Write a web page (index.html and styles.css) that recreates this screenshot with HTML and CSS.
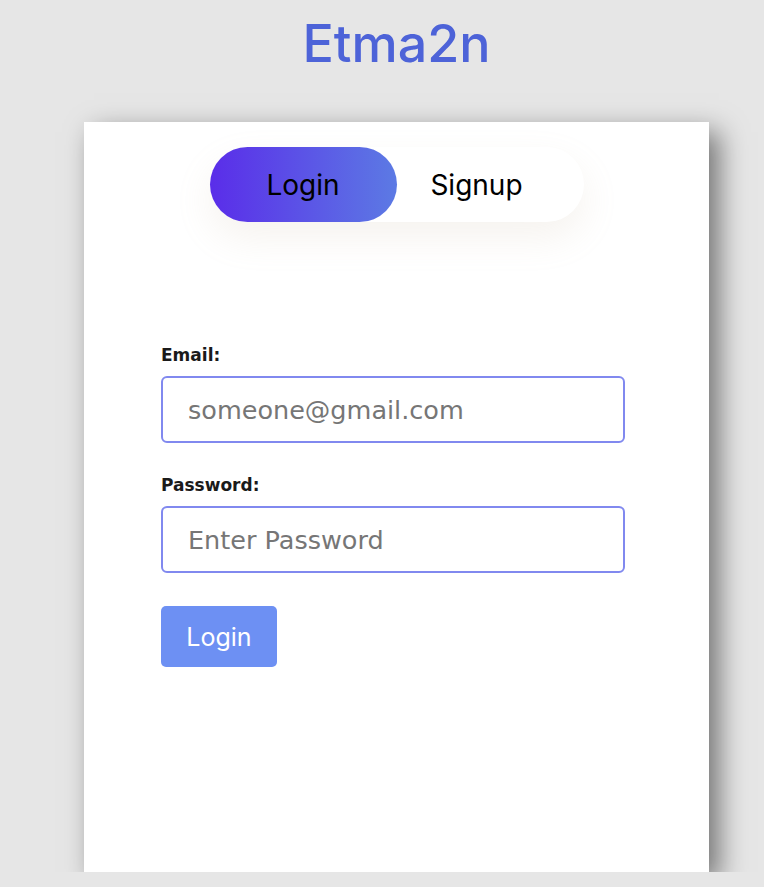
FILE: index.html
```html
<!DOCTYPE html>
<html>
<head>
<meta charset="utf-8">
<link rel="stylesheet" href="styles.css">
</head>
<body>
<div class="wrap">
  <h1 class="title">Etma2n</h1>
  <div class="card">
    <div class="toggle">
      <button class="tab active">Login</button>
      <button class="tab tab-right">Signup</button>
    </div>
    <form class="form">
      <label class="label" for="email">Email:</label>
      <input class="field" id="email" type="text" placeholder="someone@gmail.com">
      <label class="label" for="pw">Password:</label>
      <input class="field" id="pw" type="password" placeholder="Enter Password">
      <button type="button" class="submit">Login</button>
    </form>
  </div>
</div>
</body>
</html>
```

FILE: styles.css
```css
html, body {
  margin: 0;
  padding: 0;
  background: #e6e6e6;
  font-family: Inter, "Noto Sans", sans-serif;
}
.wrap {
  width: 625px;
  margin-left: 84px;
  padding-top: 14px;
}
.title {
  margin: 0;
  text-align: center;
  font-size: 52px;
  font-weight: 500;
  color: #4d63d8;
  line-height: 60px;
}
.card {
  margin-top: 48px;
  height: 750px;
  background: #fff;
  box-shadow: 10px 10px 26px rgba(0, 0, 0, 0.5);
  box-sizing: border-box;
  padding-top: 25px;
}
.toggle {
  width: 374px;
  height: 75px;
  margin: 0 auto;
  display: flex;
  border-radius: 38px;
  background: #fff;
  box-shadow: 0 16px 36px rgba(190, 170, 140, 0.14);
}
.tab {
  flex: 0 0 187px;
  box-sizing: border-box;
  border: none;
  background: transparent;
  font-family: inherit;
  font-size: 28px;
  color: #000;
  border-radius: 38px;
  padding: 0;
}
.tab.active {
  background: linear-gradient(90deg, #5a2de9, #5c7ae4);
}
.tab-right {
  padding-right: 27px;
}
.form {
  display: flex;
  flex-direction: column;
  align-items: flex-start;
  padding-left: 77px;
  margin-top: 123px;
}
.label {
  font-family: "DejaVu Sans", sans-serif;
  font-size: 17px;
  font-weight: 700;
  color: #1a1a1a;
  line-height: 20px;
  margin-bottom: 11px;
}
.field {
  width: 464px;
  height: 67px;
  box-sizing: border-box;
  border: 2px solid #8189ef;
  border-radius: 6px;
  padding: 0 25px;
  font-family: "DejaVu Sans", sans-serif;
  font-size: 25.5px;
  margin-bottom: 32px;
  outline: none;
}
.field::placeholder {
  color: #767676;
}
.submit {
  width: 116px;
  height: 61px;
  border: none;
  border-radius: 5px;
  background: #6d90f3;
  color: #fff;
  font-family: inherit;
  font-size: 25px;
  padding: 0;
  margin-top: 1px;
}
```
